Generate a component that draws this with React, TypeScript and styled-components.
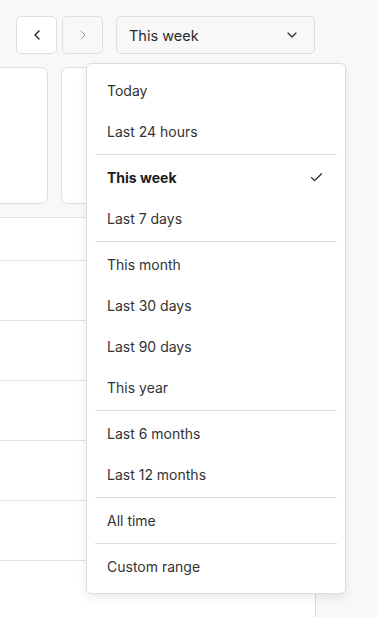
import { createGlobalStyle } from "styled-components"
import styled from "styled-components"
import { Check, ChevronDown, ChevronLeft, ChevronRight } from "lucide-react"

const groups = [
 ["Today", "Last 24 hours"],
 ["This week", "Last 7 days"],
 ["This month", "Last 30 days", "Last 90 days", "This year"],
 ["Last 6 months", "Last 12 months"],
 ["All time"],
 ["Custom range"]
]

const selected = "This week"

const App = () => (
 <>
  <Global />
  <Page>
   <Toolbar>
    <NavButton aria-label="Previous period">
     <ChevronLeft size={16} strokeWidth={2} />
    </NavButton>
    <NavButton aria-label="Next period" disabled>
     <ChevronRight size={16} strokeWidth={1.5} />
    </NavButton>
    <Select>
     <span>{selected}</span>
     <ChevronDown size={16} strokeWidth={1.75} />
    </Select>
   </Toolbar>
   <Cards>
    <Card />
    <Card />
   </Cards>
   <Table>
    {[0, 1, 2, 3, 4, 5].map(i => (
     <Row key={i} />
    ))}
   </Table>
   <Menu>
    {groups.map((group, g) => (
     <Group key={g} $first={g === 0}>
      {group.map(label => (
       <Item key={label} $active={label === selected}>
        {label}
        {label === selected && <Check size={15} strokeWidth={1.75} />}
       </Item>
      ))}
     </Group>
    ))}
   </Menu>
  </Page>
 </>
)

export default App

const Global = createGlobalStyle`
 html, body {
  margin: 0;
  background: #f8f8f8;
  font-family: Inter, "Noto Sans", sans-serif;
  color: #2b2b2b;
 }
 * {
  box-sizing: border-box;
 }
`

const Page = styled.div`
 position: relative;
 width: 377px;
 height: 617px;
 overflow: hidden;
 padding-top: 16px;
`

const Toolbar = styled.div`
 display: flex;
 align-items: center;
 gap: 5px;
 padding-left: 16px;
`

const NavButton = styled.button`
 display: inline-flex;
 align-items: center;
 justify-content: center;
 width: 41px;
 height: 38px;
 padding: 0;
 border: 1px solid #dedede;
 border-radius: 5px;
 background: #fff;
 color: #1f1f1f;

 &:disabled {
  background: #f8f8f8;
  color: #9a9a9a;
 }
`

const Select = styled.button`
 display: flex;
 align-items: center;
 justify-content: space-between;
 width: 199px;
 height: 38px;
 margin-left: 8px;
 padding: 0 14px 0 12px;
 border: 1px solid #dedede;
 border-radius: 5px;
 background: #f8f8f8;
 font: 400 14.5px Inter, "Noto Sans", sans-serif;
 color: #2b2b2b;
`

const Cards = styled.div`
 display: flex;
 gap: 13px;
 margin-top: 13px;
 margin-left: -60px;
`

const Card = styled.div`
 flex: none;
 width: 108px;
 height: 137px;
 background: #fff;
 border: 1px solid #dedede;
 border-radius: 7px;
`

const Table = styled.div`
 width: 316px;
 margin-top: 13px;
 background: #fff;
 border-top: 1px solid #e2e2e2;
 border-right: 1px solid #dcdcdc;
 padding-top: 42px;
`

const Row = styled.div`
 height: 60px;
 border-top: 1px solid #e2e2e2;
`

const Menu = styled.div`
 position: absolute;
 top: 63px;
 left: 86px;
 width: 260px;
 padding: 6px 8px 6px;
 background: #fff;
 border: 1px solid #dcdcdc;
 border-radius: 5px;
 box-shadow: 0 4px 10px rgba(0, 0, 0, 0.08);
`

const Group = styled.div<{ $first?: boolean }>`
 ${p => !p.$first && `
  border-top: 1px solid #dcdcdc;
  margin-top: 2px;
  padding-top: 2px;
 `}
`

const Item = styled.div<{ $active?: boolean }>`
 display: flex;
 align-items: center;
 justify-content: space-between;
 height: 41px;
 padding: 0 13px 0 12px;
 font-size: 14px;
 font-weight: ${p => (p.$active ? 700 : 400)};
 color: ${p => (p.$active ? "#1c1c1c" : "#333")};
`
